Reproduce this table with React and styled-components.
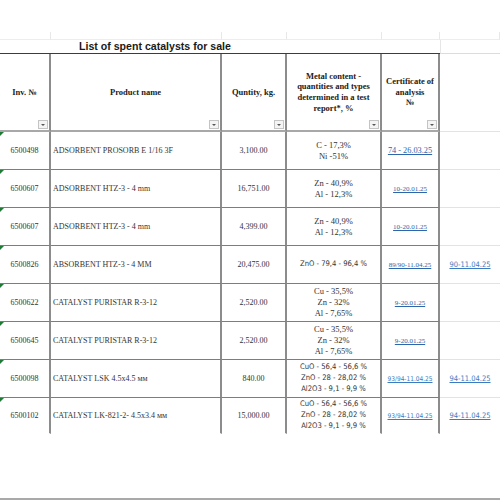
import React from 'react';
import styled, { createGlobalStyle } from 'styled-components';

const GlobalStyle = createGlobalStyle`
  body {
    margin: 0;
    background: #fff;
  }
`;

const COLS = '51px 171px 65px 95px 58px 60px';
const SANS = '"DejaVu Sans Condensed", "Liberation Sans", Arial, sans-serif';
const SERIF = '"Liberation Serif", "Times New Roman", serif';

const Page = styled.div`
  width: 500px;
  height: 500px;
  box-sizing: border-box;
  padding-top: 32px;
  border-bottom: 2px solid #a9a9a9;
  display: flex;
  flex-direction: column;
  overflow: hidden;
  font-family: ${SERIF};
  color: #2b2b2b;
`;

const Row = styled.div`
  display: grid;
  grid-template-columns: ${COLS};
  height: ${p => p.$h}px;
  flex: none;
`;

const GridCell = styled.div`
  box-sizing: border-box;
  border-right: 1px solid #e8e8e8;
  border-bottom: 1px solid #ededed;
`;

const TitleCell = styled.div`
  grid-column: 1 / 6;
  box-sizing: border-box;
  border-bottom: 1px solid #3c3c3c;
  padding-left: 79px;
  font-family: "Liberation Sans", Arial, sans-serif;
  font-weight: bold;
  font-size: 10.6px;
  line-height: 13px;
  color: #1a1a1a;
`;

const TitleSide = styled.div`
  box-sizing: border-box;
  border-left: 1px solid #e6e6e6;
  border-bottom: 1px solid #dcdcdc;
`;

const HeadCell = styled.div`
  position: relative;
  box-sizing: border-box;
  border-right: 2px solid #8c8c8c;
  border-bottom: 2px solid #a8a8a8;
  display: flex;
  align-items: center;
  justify-content: center;
  text-align: center;
  font-weight: bold;
  font-size: 8.5px;
  line-height: 10.7px;
  color: #222;
  padding: 0 3px;
`;

const SideCell = styled.div`
  box-sizing: border-box;
  border-bottom: 1px solid ${p => (p.$last ? 'transparent' : '#e3e3e3')};
  display: flex;
  align-items: center;
  justify-content: center;
`;

const FilterButton = styled.span`
  position: absolute;
  right: 1px;
  bottom: 1px;
  width: 8px;
  height: 7px;
  border: 1px solid #c4c4c4;
  background: #f4f4f4;
  display: flex;
  align-items: center;
  justify-content: center;

  &::after {
    content: '';
    border-left: 2px solid transparent;
    border-right: 2px solid transparent;
    border-top: 2px solid #555;
  }
`;

const DataCell = styled.div`
  position: relative;
  box-sizing: border-box;
  border-right: 2px solid #8c8c8c;
  border-bottom: 1px solid ${p => (p.$last ? 'transparent' : '#7d7d7d')};
  display: flex;
  flex-direction: column;
  align-items: ${p => (p.$align === 'left' ? 'flex-start' : 'center')};
  justify-content: center;
  padding-left: ${p => (p.$align === 'left' ? '2px' : '0')};
  font-size: 8px;
  color: #333;
  white-space: nowrap;

  ${p => p.$mark && `
    &::before {
      content: '';
      position: absolute;
      left: 0;
      top: 0;
      border-top: 4px solid #1f7a36;
      border-right: 4px solid transparent;
    }
  `}
`;

const MetalLine = styled.div`
  font-family: ${p => (p.$sans ? SANS : SERIF)};
  font-size: ${p => (p.$sans ? '7.6px' : '8.5px')};
  line-height: 10.7px;
  color: #333;
`;

const CertLink = styled.a`
  font-family: ${p => (p.$sans ? SANS : SERIF)};
  font-size: ${p => p.$size}px;
  color: ${p => (p.$sans ? '#3a7cc2' : '#2c66ab')};
  text-decoration: underline;
  cursor: pointer;
`;

const Spacer = styled.div`
  flex: 1;
`;

const headers = [
  'Inv. №',
  'Product name',
  'Quntity, kg.',
  <>Metal content -<br />quantities and types<br />determined in a test<br />report*, %</>,
  <>Certificate of<br />analysis<br />№</>,
];

const sansMetal = ['CuO - 56,4 - 56,6 %', 'ZnO - 28 - 28,02 %', 'Al2O3 - 9,1 - 9,9 %'];

const rows = [
  { inv: '6500498', name: 'ADSORBENT PROSORB E 1/16 3F', qty: '3,100.00', metal: ['C - 17,3%', 'Ni -51%'], cert: '74 - 26.03.25', size: 8.3 },
  { inv: '6500607', name: 'ADSORBENT HTZ-3 - 4 mm', qty: '16,751.00', metal: ['Zn - 40,9%', 'Al - 12,3%'], cert: '10-20.01.25', size: 7 },
  { inv: '6500607', name: 'ADSORBENT HTZ-3 - 4 mm', qty: '4,399.00', metal: ['Zn - 40,9%', 'Al - 12,3%'], cert: '10-20.01.25', size: 7 },
  { inv: '6500826', name: 'ABSORBENT HTZ-3 - 4 MM', qty: '20,475.00', metal: ['ZnO - 79,4 - 96,4 %'], sansMetal: true, cert: '89/90-11.04.25', size: 7, extra: '90-11.04.25' },
  { inv: '6500622', name: 'CATALYST PURISTAR R-3-12', qty: '2,520.00', metal: ['Cu - 35,5%', 'Zn - 32%', 'Al - 7,65%'], cert: '9-20.01.25', size: 7 },
  { inv: '6500645', name: 'CATALYST PURISTAR R-3-12', qty: '2,520.00', metal: ['Cu - 35,5%', 'Zn - 32%', 'Al - 7,65%'], cert: '9-20.01.25', size: 7 },
  { inv: '6500098', name: 'CATALYST LSK 4.5x4.5 мм', qty: '840.00', metal: sansMetal, sansMetal: true, cert: '93/94-11.04.25', certSans: true, size: 6.5, extra: '94-11.04.25' },
  { inv: '6500102', name: 'CATALYST LK-821-2- 4.5x3.4 мм', qty: '15,000.00', metal: sansMetal, sansMetal: true, cert: '93/94-11.04.25', certSans: true, size: 6.5, extra: '94-11.04.25', last: true },
];

export default function App() {
  return (
    <>
      <GlobalStyle />
      <Page>
        <Row $h={8}>
          {[0, 1, 2, 3, 4, 5].map(i => <GridCell key={i} />)}
        </Row>
        <Row $h={14}>
          <TitleCell>List of spent catalysts for sale</TitleCell>
          <TitleSide />
        </Row>
        <Row $h={78}>
          {headers.map((h, i) => (
            <HeadCell key={i}>
              <span>{h}</span>
              <FilterButton />
            </HeadCell>
          ))}
          <SideCell />
        </Row>
        {rows.map((r, i) => (
          <Row key={i} $h={r.last ? 36 : 38}>
            <DataCell $mark $last={r.last}>{r.inv}</DataCell>
            <DataCell $align="left" $last={r.last}>{r.name}</DataCell>
            <DataCell $last={r.last}>{r.qty}</DataCell>
            <DataCell $last={r.last}>
              {r.metal.map(m => (
                <MetalLine key={m} $sans={r.sansMetal}>{m}</MetalLine>
              ))}
            </DataCell>
            <DataCell $last={r.last}>
              <CertLink $size={r.size} $sans={r.certSans}>{r.cert}</CertLink>
            </DataCell>
            <SideCell $last={r.last}>
              {r.extra && <CertLink $sans $size={7.5}>{r.extra}</CertLink>}
            </SideCell>
          </Row>
        ))}
        <Spacer />
      </Page>
    </>
  );
}
